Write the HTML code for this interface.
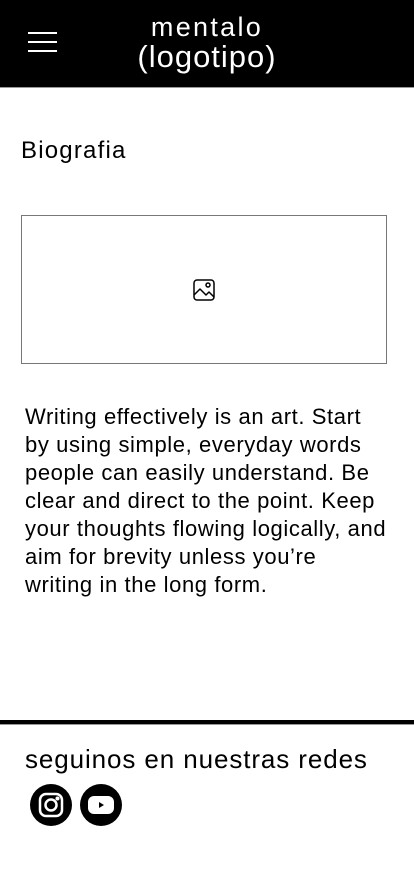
<!DOCTYPE html>
<html><head><meta charset="utf-8"><style>
*{margin:0;padding:0;box-sizing:border-box}
body{width:414px;height:896px;background:#fff;font-family:"Liberation Sans",sans-serif;color:#000;position:relative;overflow:hidden}
.hdr{position:absolute;left:0;top:0;width:414px;height:88px;background:#000;border-bottom:1px solid #999}
.ham{position:absolute;left:28px;top:32px;width:29px}
.ham div{height:2px;background:#fff;margin-bottom:7px}
.logo{position:absolute;left:0;width:414px;text-align:center;color:#fff;font-size:27px;line-height:29px;top:13px;letter-spacing:2.3px}
.logo .b{font-size:31px;letter-spacing:1px}
h1{position:absolute;left:21px;top:137px;font-size:24px;font-weight:normal;letter-spacing:1.2px}
.img{position:absolute;left:21px;top:215px;width:366px;height:149px;border:1px solid #777}
.img svg{position:absolute;left:170px;top:62px}
p{position:absolute;left:25px;top:403px;white-space:nowrap;font-size:22px;line-height:28px;letter-spacing:0.6px}
.line{position:absolute;left:0;top:720px;width:414px;height:5px;background:#000;border-bottom:1px solid #999}
.f{position:absolute;left:25px;top:744px;font-size:26px;letter-spacing:0.9px}
.ic{position:absolute;top:784px;width:42px;height:42px;border-radius:50%;background:#000}
</style></head><body>
<div class="hdr">
<div class="ham"><div></div><div></div><div></div></div>
<div class="logo">mentalo<br><span class="b">(logotipo)</span></div>
</div>
<h1>Biografia</h1>
<div class="img"><svg width="24" height="24" viewBox="0 0 24 24" fill="none" stroke="#000" stroke-width="1.5" stroke-linejoin="round"><rect x="2" y="2" width="20" height="20" rx="3"/><circle cx="16" cy="7" r="2"/><path d="M2 17l6-6 6 6 3-3 5 5"/></svg></div>
<p>Writing effectively is an art. Start<br>by using simple, everyday words<br>people can easily understand. Be<br>clear and direct to the point. Keep<br>your thoughts flowing logically, and<br>aim for brevity unless you’re<br>writing in the long form.</p>
<div class="line"></div>
<div class="f">seguinos en nuestras redes</div>
<div class="ic" style="left:30px"><svg width="42" height="42" viewBox="0 0 42 42" fill="none" stroke="#fff" stroke-width="2.5"><rect x="10" y="10" width="22" height="22" rx="6"/><circle cx="21" cy="21" r="5.5"/><circle cx="27.5" cy="14.5" r="0.8" fill="#fff"/></svg></div>
<div class="ic" style="left:80px"><svg width="42" height="42" viewBox="0 0 42 42"><rect x="8" y="12" width="26" height="18" rx="6" fill="#fff"/><path d="M19 18v6l5-3z" fill="#000"/></svg></div>
</body></html>
